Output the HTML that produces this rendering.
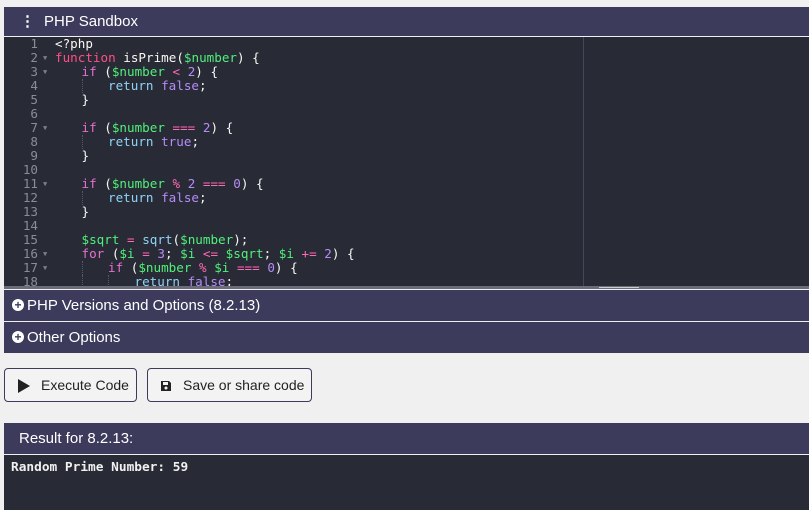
<!DOCTYPE html>
<html><head><style>
body{margin:0;background:#f0f0f0;width:809px;height:510px;overflow:hidden;font-family:"Liberation Sans",sans-serif;position:relative}
.bar{position:absolute;left:4px;right:0;background:#3c3b5c;color:#fff}
.ed{position:absolute;left:4px;right:0;top:37px;height:249px;background:#282b36;overflow:hidden}
.ln{position:absolute;left:0;width:34px;text-align:right;color:#8a8c96}
.code{position:absolute;left:51px;white-space:pre;color:#f8f8f2}
.row{position:absolute;height:14px;line-height:14px;font-family:"DejaVu Sans Mono",monospace;font-size:12.6px}
.fa{position:absolute;left:39px;color:#7d7f88;font-size:7px}
.in{display:inline-block;width:26.5px;height:14px;vertical-align:top;box-sizing:border-box}
.g{border-left:1px dotted #555866}
.f{color:#ff4f86}.k{color:#e66fcf}.v{color:#50f07a}.n{color:#b48cf7}.r{color:#8fd3f8}.o{color:#ff6ab4}
.btn{position:absolute;top:368px;height:34px;border:1px solid #3c3b5c;border-radius:4px;background:#f3f3f3;font-size:14px;color:#222;line-height:33px;box-sizing:border-box}
.pl{position:absolute;left:8px;top:9px;width:12px;height:12px;border-radius:50%;background:#fff;color:#3c3b5c;font-size:12px;line-height:12px;text-align:center;font-weight:bold}
</style></head><body>
<div class="bar" style="top:7px;height:29px;font-size:15px;line-height:29px"><span style="position:absolute;left:16px;font-weight:bold">&#8942;</span><span style="position:absolute;left:40px">PHP Sandbox</span></div>
<div class="ed">
<div style="position:absolute;left:579px;top:0;bottom:0;width:1px;background:#44475a"></div>
<div id="c"></div>
</div>
<div style="position:absolute;left:4px;right:0;top:286px;height:3px;background:#6b6b7a"></div>
<div style="position:absolute;left:599px;width:40px;top:287px;height:1px;background:#ccc"></div>
<div class="bar" style="top:290px;height:31px;font-size:15px;line-height:31px"><span class="pl">+</span><span style="position:absolute;left:23px">PHP Versions and Options (8.2.13)</span></div>
<div class="bar" style="top:322px;height:31px;font-size:15px;line-height:31px"><span class="pl">+</span><span style="position:absolute;left:23px">Other Options</span></div>
<div class="btn" style="left:4px;width:133px"><svg style="position:absolute;left:13px;top:10px" width="12" height="14" viewBox="0 0 12 14"><path d="M0 0L12 7L0 14z" fill="#222"/></svg><span style="position:absolute;left:36px">Execute Code</span></div>
<div class="btn" style="left:147px;width:165px"><svg style="position:absolute;left:12px;top:11px" width="12" height="12" viewBox="0 0 12 12"><path d="M1 1h8l2 2v8H1z" fill="#222"/><rect x="3" y="2" width="5" height="3" fill="#f3f3f3"/><circle cx="6" cy="8" r="1.5" fill="#f3f3f3"/></svg><span style="position:absolute;left:35px">Save or share code</span></div>
<div class="bar" style="top:423px;height:31px;font-size:15px;line-height:31px"><span style="position:absolute;left:15px">Result for 8.2.13:</span></div>
<div style="position:absolute;left:4px;right:0;top:455px;bottom:0;background:#282b36;color:#f0f0f0;font-family:'DejaVu Sans Mono',monospace;font-size:12.8px;padding:5px 7px;font-weight:bold">Random Prime Number: 59</div>
<script>
var L=[
[0,'&lt;?php'],
[0,'<span class="f">function</span> isPrime(<span class="v">$number</span>) {'],
[1,'<span class="k">if</span> (<span class="v">$number</span> <span class="o">&lt;</span> <span class="n">2</span>) {'],
[2,'<span class="r">return</span> <span class="n">false</span>;'],
[1,'}'],[0,''],
[1,'<span class="k">if</span> (<span class="v">$number</span> <span class="o">===</span> <span class="n">2</span>) {'],
[2,'<span class="r">return</span> <span class="n">true</span>;'],
[1,'}'],[0,''],
[1,'<span class="k">if</span> (<span class="v">$number</span> <span class="o">%</span> <span class="n">2</span> <span class="o">===</span> <span class="n">0</span>) {'],
[2,'<span class="r">return</span> <span class="n">false</span>;'],
[1,'}'],[0,''],
[1,'<span class="v">$sqrt</span> <span class="o">=</span> <span class="r">sqrt</span>(<span class="v">$number</span>);'],
[1,'<span class="k">for</span> (<span class="v">$i</span> <span class="o">=</span> <span class="n">3</span>; <span class="v">$i</span> <span class="o">&lt;=</span> <span class="v">$sqrt</span>; <span class="v">$i</span> <span class="o">+=</span> <span class="n">2</span>) {'],
[2,'<span class="k">if</span> (<span class="v">$number</span> <span class="o">%</span> <span class="v">$i</span> <span class="o">===</span> <span class="n">0</span>) {'],
[3,'<span class="r">return</span> <span class="n">false</span>;']];
var fold=[2,3,7,11,16,17],h='';
for(var i=0;i<L.length;i++){var t=i*14,ind='';
for(var j=0;j<L[i][0];j++)ind+='<span class="in'+(j>0?' g':'')+'"></span>';
h+='<div class="row ln" style="top:'+t+'px">'+(i+1)+'</div>';
if(fold.indexOf(i+1)>=0)h+='<div class="row fa" style="top:'+t+'px">&#9660;</div>';
h+='<div class="row code" style="top:'+t+'px">'+ind+L[i][1]+'</div>';}
document.getElementById('c').innerHTML=h;
</script>
</body></html>
